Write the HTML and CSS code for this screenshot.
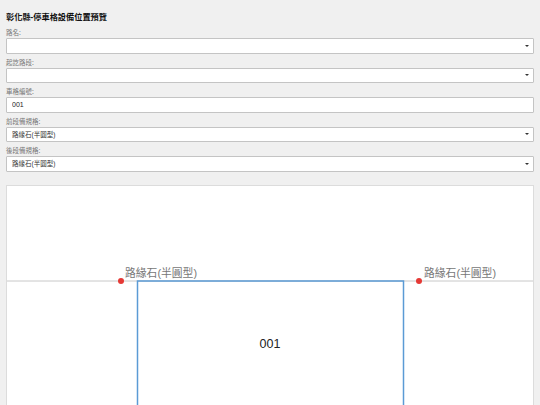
FILE: index.html
```html
<!DOCTYPE html>
<html lang="zh-Hant">
<head>
<meta charset="utf-8">
<title>彰化縣-停車格設備位置預覽</title>
<link rel="stylesheet" href="styles.css">
</head>
<body>
<h1 class="title">彰化縣-停車格設備位置預覽</h1>
<div class="field">
  <label class="label">路名:</label>
  <div class="select-wrap"><select class="control"><option></option></select></div>
</div>
<div class="field">
  <label class="label">起訖路段:</label>
  <div class="select-wrap"><select class="control"><option></option></select></div>
</div>
<div class="field">
  <label class="label">車格編號:</label>
  <input class="control input" type="text" value="001">
</div>
<div class="field">
  <label class="label">前段備規格:</label>
  <div class="select-wrap"><select class="control"><option>路緣石(半圓型)</option></select></div>
</div>
<div class="field">
  <label class="label">後段備規格:</label>
  <div class="select-wrap"><select class="control"><option>路緣石(半圓型)</option></select></div>
</div>
<div class="canvas">
  <svg class="preview" width="526" height="300" viewBox="0 0 526 300">
    <line x1="0" y1="95" x2="526" y2="95" stroke="#c8c8c8" stroke-width="1"/>
    <rect x="130.5" y="95" width="266" height="260" fill="none" stroke="#5b9bd5" stroke-width="1.5"/>
    <circle cx="114" cy="95" r="3" fill="#e53935"/>
    <circle cx="412" cy="95" r="3" fill="#e53935"/>
    <text class="spec" x="118" y="91">路緣石(半圓型)</text>
    <text class="spec" x="417" y="91">路緣石(半圓型)</text>
    <text class="code" x="263" y="162" text-anchor="middle">001</text>
  </svg>
</div>
</body>
</html>
```
FILE: styles.css
```css
html, body {
  margin: 0;
  background: #f0f0f0;
}
body {
  padding: 12px 6px 0;
  font-family: "Liberation Sans", "Noto Sans CJK TC", sans-serif;
  color: #222;
  overflow: hidden;
  height: 405px;
  box-sizing: border-box;
}
.title {
  margin: 0;
  height: 12px;
  font-size: 8.2px;
  line-height: 12px;
  font-weight: bold;
  color: #111;
}
.field {
  display: flex;
  flex-direction: column;
  padding-top: 3px;
}
.label {
  display: block;
  height: 10px;
  font-size: 6.5px;
  line-height: 10px;
  color: #777;
  font-family: "Noto Sans CJK TC", sans-serif;
  overflow: visible;
}
.select-wrap {
  position: relative;
  margin-top: 1px;
  height: 15.5px;
}
.select-wrap::after {
  content: "";
  position: absolute;
  right: 5px;
  top: 6.5px;
  width: 0;
  height: 0;
  border-left: 2px solid transparent;
  border-right: 2px solid transparent;
  border-top: 2.5px solid #333;
  pointer-events: none;
}
.control {
  display: block;
  box-sizing: border-box;
  width: 528px;
  height: 15.5px;
  margin: 0;
  padding: 0 5px;
  border: 1px solid #c4c4c4;
  border-radius: 1px;
  background: #fff;
  font-family: "Liberation Sans", "Noto Sans CJK TC", sans-serif;
  font-size: 6.5px;
  line-height: 13px;
  color: #333;
  -webkit-appearance: none;
  appearance: none;
  outline: none;
}
.input {
  margin-top: 1px;
  font-size: 7px;
  color: #222;
}
.canvas {
  margin-top: 13.5px;
  width: 528px;
  height: 400px;
  box-sizing: border-box;
  border: 1px solid #dcdcdc;
  background: #fff;
}
.preview {
  display: block;
}
.spec {
  font-family: "Liberation Sans", "Noto Sans CJK TC", sans-serif;
  font-size: 10.8px;
  fill: #777;
}
.code {
  font-family: "Liberation Sans", sans-serif;
  font-size: 12.5px;
  fill: #222;
}
```
